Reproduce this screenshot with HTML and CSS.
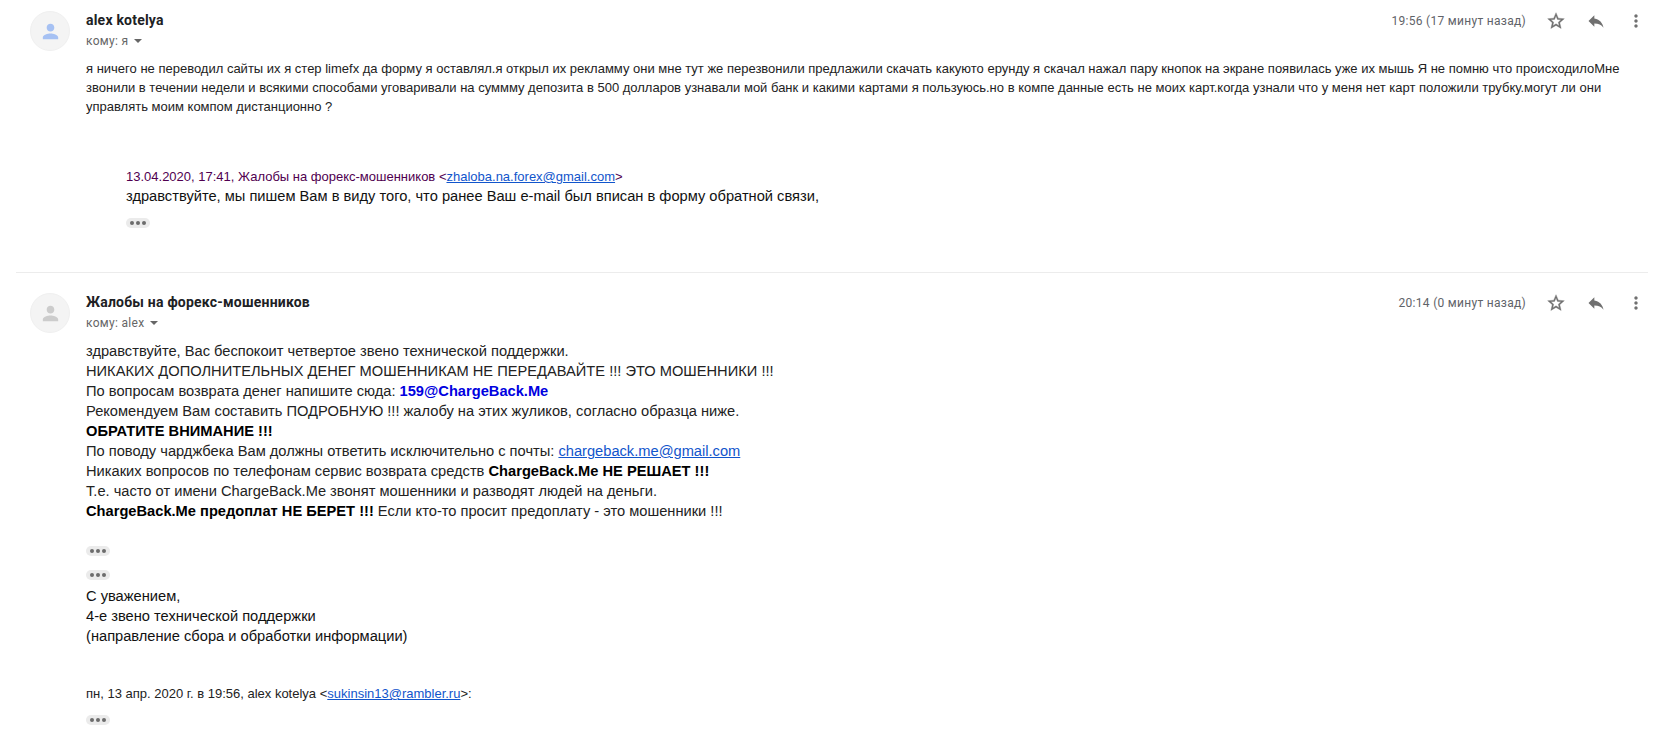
FILE: index.html
```html
<!DOCTYPE html>
<html lang="ru">
<head>
<meta charset="utf-8">
<title>alex kotelya</title>
<link rel="stylesheet" href="styles.css">
</head>
<body>
<svg class="defs" width="0" height="0">
  <symbol id="person" viewBox="0 0 24 24"><path d="M12 12c2.21 0 4-1.79 4-4s-1.79-4-4-4-4 1.79-4 4 1.79 4 4 4zm0 2c-2.67 0-8 1.34-8 4v2h16v-2c0-2.660-5.330-4-8-4z"/></symbol>
  <symbol id="star" viewBox="0 0 24 24"><path d="M22 9.240l-7.190-.62L12 2 9.190 8.630 2 9.240l5.460 4.730L5.820 21 12 17.270 18.180 21l-1.630-7.030L22 9.240zM12 15.400l-3.760 2.270 1-4.280-3.320-2.880 4.380-.38L12 6.100l1.710 4.040 4.380.38-3.320 2.880 1 4.280L12 15.400z"/></symbol>
  <symbol id="reply" viewBox="0 0 24 24"><path d="M10 9V5l-7 7 7 7v-4.100c5 0 8.500 1.600 11 5.100-1-5-4-10-11-11z"/></symbol>
  <symbol id="more" viewBox="0 0 24 24"><path d="M12 8c1.100 0 2-.9 2-2s-.9-2-2-2-2 .9-2 2 .9 2 2 2zm0 2c-1.100 0-2 .9-2 2s.9 2 2 2 2-.9 2-2-.9-2-2-2zm0 6c-1.100 0-2 .9-2 2s.9 2 2 2 2-.9 2-2-.9-2-2-2z"/></symbol>
</svg>
<main class="thread">
  <article class="message first">
    <div class="avatar blue"><svg><use href="#person"/></svg></div>
    <div class="content">
      <header class="head">
        <div class="who">
          <h3 class="name">alex kotelya</h3>
          <div class="to"><span>кому: я</span><i class="caret"></i></div>
        </div>
        <div class="tools">
          <span class="date">19:56 (17 минут назад)</span>
          <svg class="ico star"><use href="#star"/></svg>
          <svg class="ico"><use href="#reply"/></svg>
          <svg class="ico"><use href="#more"/></svg>
        </div>
      </header>
      <div class="small-text">
        <p>я ничего не переводил сайты их я стер limefx да форму я оставлял.я открыл их рекламму они мне тут же перезвонили предлажили скачать какуюто ерунду я скачал нажал пару кнопок на экране появилась уже их мышь Я не помню что происходилоМне</p>
        <p>звонили в течении недели и всякими способами уговаривали на суммму депозита в 500 долларов узнавали мой банк и какими картами я пользуюсь.но в компе данные есть не моих карт.когда узнали что у меня нет карт положили трубку.могут ли они</p>
        <p>управлять моим компом дистанционно ?</p>
      </div>
      <div class="quote">
        <p class="quote-head">13.04.2020, 17:41, Жалобы на форекс-мошенников &lt;<a>zhaloba.na.forex@gmail.com</a>&gt;</p>
        <p class="quote-text">здравствуйте, мы пишем Вам в виду того, что ранее Ваш e-mail был вписан в форму обратной связи,</p>
        <div class="dots"><i></i><i></i><i></i></div>
      </div>
    </div>
  </article>
  <article class="message second">
    <div class="avatar"><svg><use href="#person"/></svg></div>
    <div class="content">
      <header class="head">
        <div class="who">
          <h3 class="name">Жалобы на форекс-мошенников</h3>
          <div class="to"><span>кому: alex</span><i class="caret"></i></div>
        </div>
        <div class="tools">
          <span class="date">20:14 (0 минут назад)</span>
          <svg class="ico star"><use href="#star"/></svg>
          <svg class="ico"><use href="#reply"/></svg>
          <svg class="ico"><use href="#more"/></svg>
        </div>
      </header>
      <div class="large-text">
        <p>здравствуйте, Вас беспокоит четвертое звено технической поддержки.</p>
        <p>НИКАКИХ ДОПОЛНИТЕЛЬНЫХ ДЕНЕГ МОШЕННИКАМ НЕ ПЕРЕДАВАЙТЕ !!! ЭТО МОШЕННИКИ !!!</p>
        <p>По вопросам возврата денег напишите сюда: <b class="contact">159@ChargeBack.Me</b></p>
        <p>Рекомендуем Вам составить ПОДРОБНУЮ !!! жалобу на этих жуликов, согласно образца ниже.</p>
        <p><b>ОБРАТИТЕ ВНИМАНИЕ !!!</b></p>
        <p>По поводу чарджбека Вам должны ответить исключительно с почты: <a>chargeback.me@gmail.com</a></p>
        <p>Никаких вопросов по телефонам сервис возврата средств <b>ChargeBack.Me НЕ РЕШАЕТ !!!</b></p>
        <p>Т.е. часто от имени ChargeBack.Me звонят мошенники и разводят людей на деньги.</p>
        <p><b>ChargeBack.Me предоплат НЕ БЕРЕТ !!!</b> Если кто-то просит предоплату - это мошенники !!!</p>
      </div>
      <div class="dots gap-above"><i></i><i></i><i></i></div>
      <div class="dots gap-between"><i></i><i></i><i></i></div>
      <div class="large-text signature">
        <p>С уважением,</p>
        <p>4-е звено технической поддержки</p>
        <p>(направление сбора и обработки информации)</p>
      </div>
      <p class="reply-head">пн, 13 апр. 2020 г. в 19:56, alex kotelya &lt;<a>sukinsin13@rambler.ru</a>&gt;:</p>
      <div class="dots gap-last"><i></i><i></i><i></i></div>
    </div>
  </article>
</main>
</body>
</html>
```
FILE: styles.css
```css
* { box-sizing: border-box; }
body { margin: 0; background: #fff; color: #222; font-family: "Liberation Sans", Arial, sans-serif; }
p, h3 { margin: 0; font-weight: normal; white-space: nowrap; }
a { color: #15c; text-decoration: underline; }
.defs { display: block; position: absolute; }
.thread { width: 1632px; margin-left: 16px; }
.message { display: flex; padding-left: 14px; }
.first { height: 273px; padding-top: 11px; border-bottom: 1px solid #ececec; }
.second { padding-top: 20px; }
.avatar { width: 40px; height: 40px; flex: none; display: flex; align-items: center; justify-content: center; margin-right: 16px; border-radius: 50%; background: #f4f4f4; border: 1px solid #f0f0f0; }
.avatar svg { width: 23px; height: 23px; fill: #ccc; }
.avatar.blue svg { fill: #a6c1f3; }
.content { flex: 1; }
.head { display: flex; justify-content: space-between; height: 48px; }
.name { font: bold 14px/20px Roboto, sans-serif; letter-spacing: .21px; color: #202124; margin-top: -1px; }
.to { display: flex; align-items: center; gap: 6px; font: 12px/20px Roboto, sans-serif; letter-spacing: .3px; color: #666; margin-top: 1px; }
.caret { border: 4px solid transparent; border-top-color: #666; border-bottom: 0; }
.tools { display: flex; align-items: center; height: 20px; gap: 20px; margin-right: 2px; }
.date { font: 12px/20px Roboto, sans-serif; letter-spacing: .29px; color: #5f6368; }
.ico { width: 20px; height: 20px; fill: #707070; }
.ico.star { stroke: #707070; stroke-width: .4px; }
.small-text { font-size: 13px; line-height: 19px; }
.quote { margin: 51px 0 0 40px; }
.quote-head { font-size: 13px; line-height: 19px; color: #500050; }
.quote-text { font-size: 14.67px; line-height: 20px; color: #111; }
.large-text { font-size: 14.67px; line-height: 20px; color: #222; }
.large-text b { color: #000; }
.large-text b.contact { color: #0000e0; }
.dots { width: 24px; height: 10px; display: flex; align-items: center; justify-content: center; gap: 2px; border-radius: 5px; background: #ebebeb; }
.dots i { width: 4px; height: 4px; border-radius: 50%; background: #6c6c6c; }
.quote .dots { margin-top: 12px; }
.gap-above { margin-top: 25px; }
.gap-between { margin-top: 14px; }
.signature { margin-top: 6px; color: #111; }
.reply-head { font-size: 13px; line-height: 19px; margin-top: 38px; }
.gap-last { margin-top: 12px; }
```
